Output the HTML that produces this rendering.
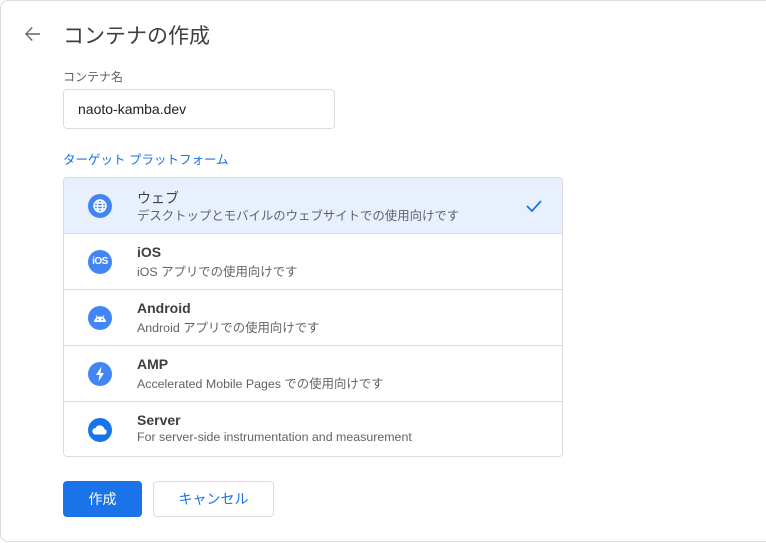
<!DOCTYPE html>
<html><head><meta charset="utf-8"><style>
*{box-sizing:border-box;margin:0;padding:0}
body{width:766px;height:543px;background:#fff;font-family:"Liberation Sans","Noto Sans CJK JP",sans-serif;position:relative;overflow:hidden}
.card{position:absolute;left:0;top:0;width:780px;height:542px;border:1px solid #dadce0;border-radius:8px;background:#fff}
.abs{position:absolute}
.title{left:63px;top:20px;font-size:21px;color:#3c4043}
.lbl{left:63px;top:68px;font-size:12px;color:#5f6368}
.inp{left:63px;top:89px;width:272px;height:40px;border:1px solid #dadce0;border-radius:4px;font-size:14px;color:#202124;padding:11px 0 0 14px}
.tp{left:63px;top:149px;font-size:12.5px;color:#1a73e8}
.list{left:63px;top:177px;width:500px;height:280px;border:1px solid #dadce0;border-radius:4px;overflow:hidden}
.row{height:56px;border-bottom:1px solid #dadce0;position:relative}
.row:last-child{border-bottom:none}
.row.sel{background:#e8f0fe}
.ic{position:absolute;left:24px;top:16px;width:24px;height:24px;border-radius:50%;background:#4285f4}
.t1{position:absolute;left:73px;top:10px;font-size:14px;color:#3c4043;font-weight:bold}
.row.sel .t1{font-weight:normal}
.t2{position:absolute;left:73px;top:28px;font-size:12.4px;color:#5f6368}
.btn1{left:63px;top:481px;width:79px;height:36px;background:#1a73e8;border-radius:4px;color:#fff;font-size:14px;text-align:center;line-height:36px}
.btn2{left:153px;top:481px;width:121px;height:36px;border:1px solid #dadce0;border-radius:4px;color:#1a73e8;font-size:14px;text-align:center;line-height:34px}
</style></head><body>
<div class="card"></div>
<svg class="abs" style="left:20px;top:22px" width="24" height="24" viewBox="0 0 24 24"><path d="M20 11.3H7.4l5.3-5.3-1-1L5 12l6.7 7 1-1-5.3-5.3H20z" fill="#5f6368"/></svg>
<div class="abs title">コンテナの作成</div>
<div class="abs lbl">コンテナ名</div>
<div class="abs inp">naoto-kamba.dev</div>
<div class="abs tp">ターゲット プラットフォーム</div>
<div class="abs list">
<div class="row sel"><div class="ic"><svg width="24" height="24" viewBox="0 0 24 24" fill="none" stroke="#fff" stroke-width="1.4"><circle cx="12" cy="12" r="6"/><ellipse cx="12" cy="12" rx="2.6" ry="6"/><path d="M6 12h12M6.8 9h10.4M6.8 15h10.4"/></svg></div><div class="t1">ウェブ</div><div class="t2">デスクトップとモバイルのウェブサイトでの使用向けです</div>
<svg style="position:absolute;left:460px;top:18px" width="20" height="20" viewBox="0 0 20 20"><path d="M3 10l5 5 9-10" fill="none" stroke="#1a73e8" stroke-width="1.8"/></svg></div>
<div class="row"><div class="ic" style="color:#fff;font-size:10px;font-weight:bold;text-align:center;line-height:24px;letter-spacing:-0.5px">iOS</div><div class="t1">iOS</div><div class="t2">iOS アプリでの使用向けです</div></div>
<div class="row"><div class="ic"><svg width="24" height="24" viewBox="0 0 24 24"><path d="M6 16a6 5.5 0 0 1 12 0z" fill="#fff"/><path d="M8 9.5l1.3 2M16 9.5l-1.3 2" stroke="#fff" stroke-width="1"/><circle cx="9.8" cy="13.5" r=".9" fill="#4285f4"/><circle cx="14.2" cy="13.5" r=".9" fill="#4285f4"/></svg></div><div class="t1">Android</div><div class="t2">Android アプリでの使用向けです</div></div>
<div class="row"><div class="ic"><svg width="24" height="24" viewBox="0 0 24 24"><path d="M13.5 4.5l-5.5 8.5h3.5l-1 6.5 5.5-8.5h-3.5z" fill="#fff"/></svg></div><div class="t1">AMP</div><div class="t2">Accelerated Mobile Pages での使用向けです</div></div>
<div class="row"><div class="ic" style="background:#1a73e8"><svg width="24" height="24" viewBox="0 0 24 24"><path d="M7.5 16.5a3.2 3.2 0 0 1 0-6.4 4.8 4.8 0 0 1 9 1.1 2.7 2.7 0 0 1 0 5.3z" fill="#fff"/></svg></div><div class="t1">Server</div><div class="t2">For server-side instrumentation and measurement</div></div>
</div>
<div class="abs btn1">作成</div>
<div class="abs btn2">キャンセル</div>
</body></html>
